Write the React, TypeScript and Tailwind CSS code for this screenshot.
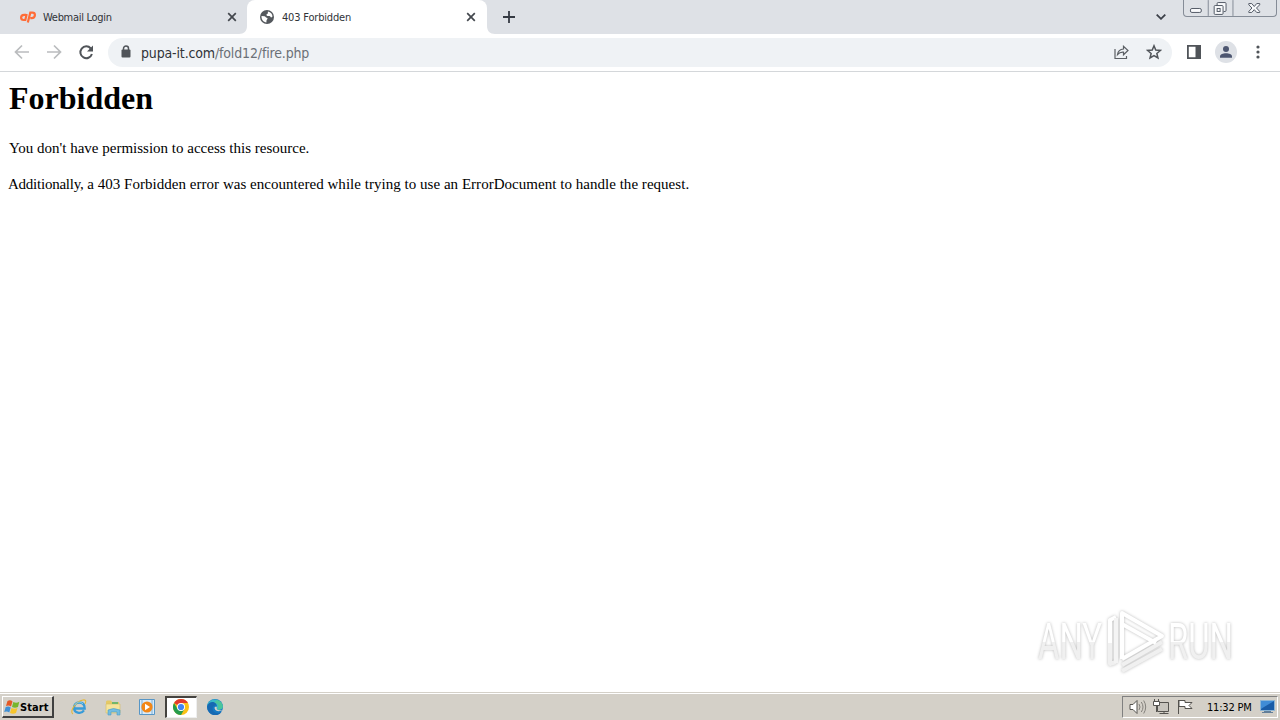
import type { ReactNode } from "react";

const uiFont = "font-['DejaVu_Sans_Condensed','Noto_Sans',sans-serif]";

function CloseIcon() {
  return (
    <svg width="10" height="10" viewBox="0 0 10 10" fill="none" stroke="#43474d" strokeWidth="1.7">
      <path d="M1.2 1.2l7.600 7.600M8.800 1.200l-7.600 7.600" />
    </svg>
  );
}

function CpanelIcon() {
  return (
    <svg width="16" height="12" viewBox="0 0 16 12" fill="none" stroke="#ff6c37" strokeWidth="2.2">
      <path d="M6.200 3.800H4.200C2.300 3.800 1.100 5 1.100 6.600S2.200 9 3.600 9h1.700L6.700 3" />
      <path d="M7.800 11.500L10.300 1.700h2.100c1.600 0 2.500.9 2.500 2.300 0 2-1.300 3.200-3.300 3.200H10.300" />
    </svg>
  );
}

function GlobeIcon() {
  return (
    <svg width="14" height="14" viewBox="0 0 14 14">
      <circle cx="7" cy="7" r="7" fill="#54585d" />
      <path d="M1.5 6l3 .2c1 .2 1.2 1.4 2.2 1.6 1 .3 1.1 1.3.3 1.8-.7.5-.4 1.7-.6 2.8C3.4 12.2 1.3 9.6 1.5 6z" fill="#fff" />
      <path d="M8 1.5c2.7.5 4.4 2.4 4.5 5.1l-1.2.9c-.9-.2-.8-1.4-1.8-1.5-1.4-.2-2.8.2-3-1.1-.1-.9 1.1-.9 1.4-1.6.2-.5-.3-1.1.1-1.8z" fill="#fff" />
    </svg>
  );
}

function Tabs() {
  return (
    <div className="flex h-[34px] bg-[#dee1e6] text-[#303338]">
      <div className="flex h-[34px] w-[247px] items-center bg-[#dee1e6] pl-5">
        <CpanelIcon />
        <span className="ml-[7px] w-[184px] pt-[2px] text-[11px] tracking-[-0.3px]">Webmail Login</span>
        <CloseIcon />
      </div>
      <div className="relative flex h-[34px] w-[240px] items-center rounded-t-lg bg-white pl-[13px]">
        <svg className="absolute -left-2 bottom-0" width="8" height="8"><path d="M8 0v8H0c5 0 8-3 8-8z" fill="#fff" /></svg>
        <svg className="absolute -right-2 bottom-0" width="8" height="8"><path d="M0 0v8h8C3 8 0 5 0 0z" fill="#fff" /></svg>
        <GlobeIcon />
        <span className="ml-2 w-[184px] pt-[2px] text-[11px] tracking-[-0.18px]">403 Forbidden</span>
        <CloseIcon />
      </div>
      <svg className="mt-[11px] ml-4" width="12" height="12" viewBox="0 0 12 12" stroke="#353a43" strokeWidth="1.8">
        <path d="M6 0v12M0 6h12" />
      </svg>
      <svg className="mt-[14px] ml-auto" width="10" height="6" viewBox="0 0 10 6" fill="none" stroke="#3c4049" strokeWidth="1.8">
        <path d="M.7.6L5 4.8 9.3.6" />
      </svg>
      <div className="mr-[3px] ml-[17px] flex h-[17px] w-[94px] rounded-b border border-t-0 border-[#858c97]">
        <svg width="93" height="16" viewBox="0 0 93 16" fill="none" stroke="#535a66">
          <path d="M24.5 0v16M49.5 0v16" stroke="#858c97" />
          <rect x="6.500" y="8.500" width="11" height="4" rx="1.500" fill="#f8f9fb" />
          <path d="M33.500 5V3.500q0-1 1-1h7q1 0 1 1v7q0 1-1 1H40" fill="#f8f9fb" />
          <rect x="30.500" y="5.500" width="9" height="9" rx="1" fill="#f8f9fb" />
          <rect x="33.500" y="8.500" width="3" height="3" />
          <path d="M65.500 3.500h3l2.500 3 2.500-3h3v1.300L73.300 8l3.200 3.500v1h-3L71 9.700l-2.500 2.800h-3v-1L68.700 8l-3.200-3.200z" fill="#f8f9fb" />
        </svg>
      </div>
    </div>
  );
}

function Toolbar() {
  return (
    <div className="flex h-[38px] items-center border-b border-[#d4d7da] bg-white pb-px">
      <svg className="ml-[14px]" width="80" height="16" viewBox="0 0 80 16" fill="none" strokeWidth="1.7">
        <path d="M15 8H2M8 1.500L1.500 8 8 14.500M33 8h13M40 1.500L46.500 8 40 14.500" stroke="#babcbe" />
        <path d="M76.800 4.500A5.900 5.900 0 1 0 77.900 10" stroke="#505459" strokeWidth="2" />
        <path d="M79 1.500v6h-6z" fill="#505459" />
      </svg>
      <div className="ml-[14px] flex h-[29px] w-[1064px] items-center rounded-full bg-[#eff2f5] pl-[13px]">
        <svg className="mb-px" width="10" height="13" viewBox="0 0 10 13">
          <path d="M2.500 5V3.500a2.500 2.500 0 0 1 5 0V5" fill="none" stroke="#505459" strokeWidth="1.500" />
          <rect x=".5" y="4.500" width="9" height="8" rx="1" fill="#505459" />
        </svg>
        <span className="ml-[10px] pt-[2px] text-[14px] whitespace-nowrap text-[#6b7077] tracking-[-0.15px]"><span className="text-[#303338]">pupa-it.com</span>/fold12/fire.php</span>
        <svg className="mr-[17px] ml-auto" width="16" height="15" viewBox="0 0 16 15" fill="none" stroke="#5b5f64" strokeWidth="1.200">
          <path d="M2 4v9.500h11.500V11" />
          <path d="M4.500 9.500c.5-3.500 2.500-5.300 6-5.500V1.300L15 5.500l-4.500 4.300V7.200C8 7 6 7.800 4.500 9.500z" />
        </svg>
        <svg className="mr-[10px]" width="16" height="16" viewBox="0 0 16 16" fill="none" stroke="#505459" strokeWidth="1.500">
          <path d="M8 1.800l1.750 4.250 4.650.4-3.550 3 1.100 4.550L8 11.600 4.050 14l1.100-4.550-3.550-3 4.650-.4z" />
        </svg>
      </div>
      <svg className="ml-[15px]" width="14" height="14" viewBox="0 0 14 14">
        <path d="M.9.9h12.200v12.200H.9z" fill="none" stroke="#505459" strokeWidth="1.800" />
        <path d="M8.500 1H13v12H8.500z" fill="#505459" />
      </svg>
      <svg className="ml-[14px]" width="22" height="22" viewBox="0 0 22 22">
        <circle cx="11" cy="11" r="11" fill="#dee1e6" />
        <circle cx="11" cy="8" r="3" fill="#4d5670" />
        <path d="M5 16.700v-1.200C5 13.200 8 12.300 11 12.300s6 .9 6 3.200v1.200z" fill="#4d5670" />
      </svg>
      <svg className="ml-[19px]" width="4" height="14" fill="#505459">
        <circle cx="2" cy="2" r="1.600" /><circle cx="2" cy="7" r="1.600" /><circle cx="2" cy="12" r="1.600" />
      </svg>
    </div>
  );
}

function Watermark() {
  return (
    <svg className="absolute top-[604px] left-[1020px] overflow-visible drop-shadow-[0_0_1.5px_#bbb]" width="240" height="76" viewBox="-10 0 240 76">
      <defs>
        <linearGradient id="fade" gradientUnits="userSpaceOnUse" x1="0" y1="0" x2="0" y2="76">
          <stop offset=".5" stopColor="#fff" />
          <stop offset=".5" stopColor="#f0f0f0" />
        </linearGradient>
      </defs>
      <g fill="url(#fade)" fontFamily="Roboto, sans-serif" fontSize="50">
        <text x="8" y="54.500" textLength="64" lengthAdjust="spacingAndGlyphs">ANY</text>
        <text x="138" y="54.500" textLength="65" lengthAdjust="spacingAndGlyphs">RUN</text>
      </g>
      <g fill="none" stroke="#fff" strokeWidth="4" strokeLinejoin="round">
        <path d="M92 61l40-23M80 39v21l6-2M92 67l40-22" stroke="#f0f0f0" />
        <path d="M92 55V9l40 23-40 23M92 20l34 19M86 13l-6 3v23" />
        <path d="M86 14v45" stroke="#f4f4f4" />
      </g>
    </svg>
  );
}

function WindowsIcon() {
  return (
    <svg width="16" height="16" viewBox="0 0 16 16">
      <path d="M3.500 2q3-1.500 5 .5L7 7.500Q4.700 6 2 7z" fill="#e45824" />
      <path d="M9.300 3q3 1.500 6-.2L14 8q-3 1.500-6 0z" fill="#77b52b" />
      <path d="M1.700 8q3-1.200 5 .5L5.300 13.500Q3 12 .2 13z" fill="#4090d5" />
      <path d="M7.500 9q3 1.500 6 0L12 14q-3 1.500-6 0z" fill="#f7c52c" />
    </svg>
  );
}

function ExplorerIcon() {
  return (
    <svg width="18" height="18" viewBox="0 0 18 18" fill="none">
      <path d="M5 10.500h9.700c0-3.800-2-6-5.400-6s-5.300 2.300-5.300 5.200c0 5.300 7 7 10 2.700" stroke="#389bd8" strokeWidth="2.300" />
      <path d="M3 16c-4-2 2.500-12.500 10-14 3.500-.7 3 2 2 4" stroke="#e6b735" strokeWidth="1.100" />
      <path d="M5 7c1-3 5.500-4 8-1" stroke="#81cfee" />
    </svg>
  );
}

function FolderIcon() {
  return (
    <svg width="17" height="17" viewBox="0 0 17 17">
      <path d="M1 2.500l1-1h4l1 1.500h7v3H1z" fill="#e5c965" />
      <path d="M1 5h14v9H1z" fill="#f6e49b" stroke="#d5bc66" strokeWidth=".6" />
      <path d="M7 3h6v2H7z" fill="#72b66b" />
      <path d="M3 16V11q5-3 12 0v5h-3v-3H6v3z" fill="#74bde0" stroke="#4a9bc2" strokeWidth=".6" />
    </svg>
  );
}

function MediaIcon() {
  return (
    <svg width="16" height="16" viewBox="0 0 16 16">
      <path d="M.5.500h15v15H.5z" fill="#d9ebfa" stroke="#5796c6" />
      <path d="M3 1v14M13 1v14" stroke="#78aed5" />
      <circle cx="8" cy="8" r="5.600" fill="#f28717" />
      <path d="M6 4.800L11 8l-5 3.200z" fill="#fff" />
    </svg>
  );
}

function ChromeIcon() {
  return (
    <svg width="16" height="16" viewBox="0 0 16 16">
      <circle cx="8" cy="8" r="8" fill="#fbc116" />
      <path d="M8 8L1.070 4A8 8 0 0 1 14.930 4H8z" fill="#e33b2e" />
      <path d="M1.070 4A8 8 0 0 0 8 16l3.500-6H4.540z" fill="#269c4d" />
      <circle cx="8" cy="8" r="4" fill="#fff" />
      <circle cx="8" cy="8" r="3.100" fill="#4285f4" />
    </svg>
  );
}

function EdgeIcon() {
  return (
    <svg width="16" height="16" viewBox="0 0 16 16">
      <circle cx="8" cy="8" r="8" fill="#1579c4" />
      <path d="M.2 7C1.200-1.500 13.500-2 15.800 7c.5 3.300-4.800 4.700-6.500 3.200 2-4.700-4.800-6.500-9.100-3.200z" fill="#39b9c8" />
      <path d="M10 1c4 1 6 4 5.800 7-.5 2-3 3-5 2.600C12 6 11 4 7 4z" fill="#4bc59b" />
      <path d="M.2 7C2 1 10 2 10 7.500c-3-3-6.500 1.800-3 5.200 2.200 2 5.500 1.700 7.600 0C9.500 20-.5 15 .2 7z" fill="#1769b2" />
      <path d="M7.500 9c.1-1.200 1.200-1.500 2-1 1 .8-.5 1.500.7 2.600 1.400 1 4.400.6 5.400-.1-2 2.600-7.500 2.200-8.100-1.500z" fill="#d4d0c8" />
    </svg>
  );
}

function TaskItem({ active, children }: { active?: boolean; children: ReactNode }) {
  return (
    <div className={active
      ? "flex h-[22px] w-8 items-center justify-center border border-t-2 border-l-2 border-[#eee] border-t-[#45433f] border-l-[#45433f] bg-white pr-px pb-px"
      : "flex h-[22px] w-8 items-center justify-center"}>
      {children}
    </div>
  );
}

function Taskbar() {
  return (
    <div className="flex h-[28px] border-t border-[#d4d0c8] bg-[#d4d0c8] text-black">
      <div className="flex w-full items-center border-t border-white">
        <button className="ml-[2px] flex h-[22px] w-[52px] items-center border border-r-2 border-b-2 border-white border-r-[#404040] border-b-[#404040] pl-px">
          <WindowsIcon />
          <span className="pt-[3px] text-[11px] font-bold tracking-[0.1px]">Start</span>
        </button>
        <div className="ml-[9px] flex gap-[2px]">
          <TaskItem><ExplorerIcon /></TaskItem>
          <TaskItem><FolderIcon /></TaskItem>
          <TaskItem><MediaIcon /></TaskItem>
          <TaskItem active><ChromeIcon /></TaskItem>
          <TaskItem><EdgeIcon /></TaskItem>
        </div>
        <div className="mr-[2px] ml-auto flex h-[22px] w-[156px] items-center border border-[#808080] border-r-white border-b-white pl-[6px]">
          <svg width="66" height="18" viewBox="0 0 66 18" fill="none" stroke="#55534f">
            <path d="M1 6.500h3L8 2.500v13l-4-4H1z" fill="#fff" />
            <path d="M10 6q2 3 0 6M12.300 4q3.400 5 0 10M14.700 2.500q4 6.500 0 13" stroke="#84817c" />
            <path d="M28.500 4.500h11v9h-11z" fill="#c8c5be" />
            <path d="M30.500 15.500h9M35 14v2M25.500 1v3M29.500 1v3M27.500 8v6" />
            <path d="M24.500 3.500h6v4h-6z" fill="#fff" />
            <path d="M49.500 2v14M50 2.500h6v2h7l-3 3 3 3h-7v-2h-6z" fill="#fff" />
          </svg>
          <span className="ml-3 w-[45px] pt-[2px] text-[11px] whitespace-nowrap tracking-[-0.2px]">11:32 PM</span>
          <svg className="ml-[8px]" width="15" height="14" viewBox="0 0 15 14">
            <path d="M.5.500h14v10H.5z" fill="#195ca7" stroke="#8cb5d5" />
            <path d="M1 1h13L4 7 1 9z" fill="#3f8cd6" />
            <path d="M4 11h7v1h2v1H2v-1h2z" fill="#627e99" />
          </svg>
        </div>
      </div>
    </div>
  );
}

export default function App() {
  return (
    <div className={`relative flex h-[720px] w-[1280px] flex-col overflow-hidden bg-white ${uiFont}`}>
      <Tabs />
      <Toolbar />
      <main className="flex-1 px-[8px] pt-[8px] font-['Liberation_Serif',serif] text-[15px] text-black">
        <h1 className="pl-px text-[32px] leading-[37px] font-bold">Forbidden</h1>
        <p className="mt-[22px] pl-px leading-[18px]">You don't have permission to access this resource.</p>
        <p className="mt-[18px] leading-[18px] tracking-[0.03px]"><span className="tracking-[-0.24px]">Additionally,</span> a 403 Forbidden error was encountered while trying to use an ErrorDocument to handle the request.</p>
      </main>
      <Watermark />
      <Taskbar />
    </div>
  );
}
